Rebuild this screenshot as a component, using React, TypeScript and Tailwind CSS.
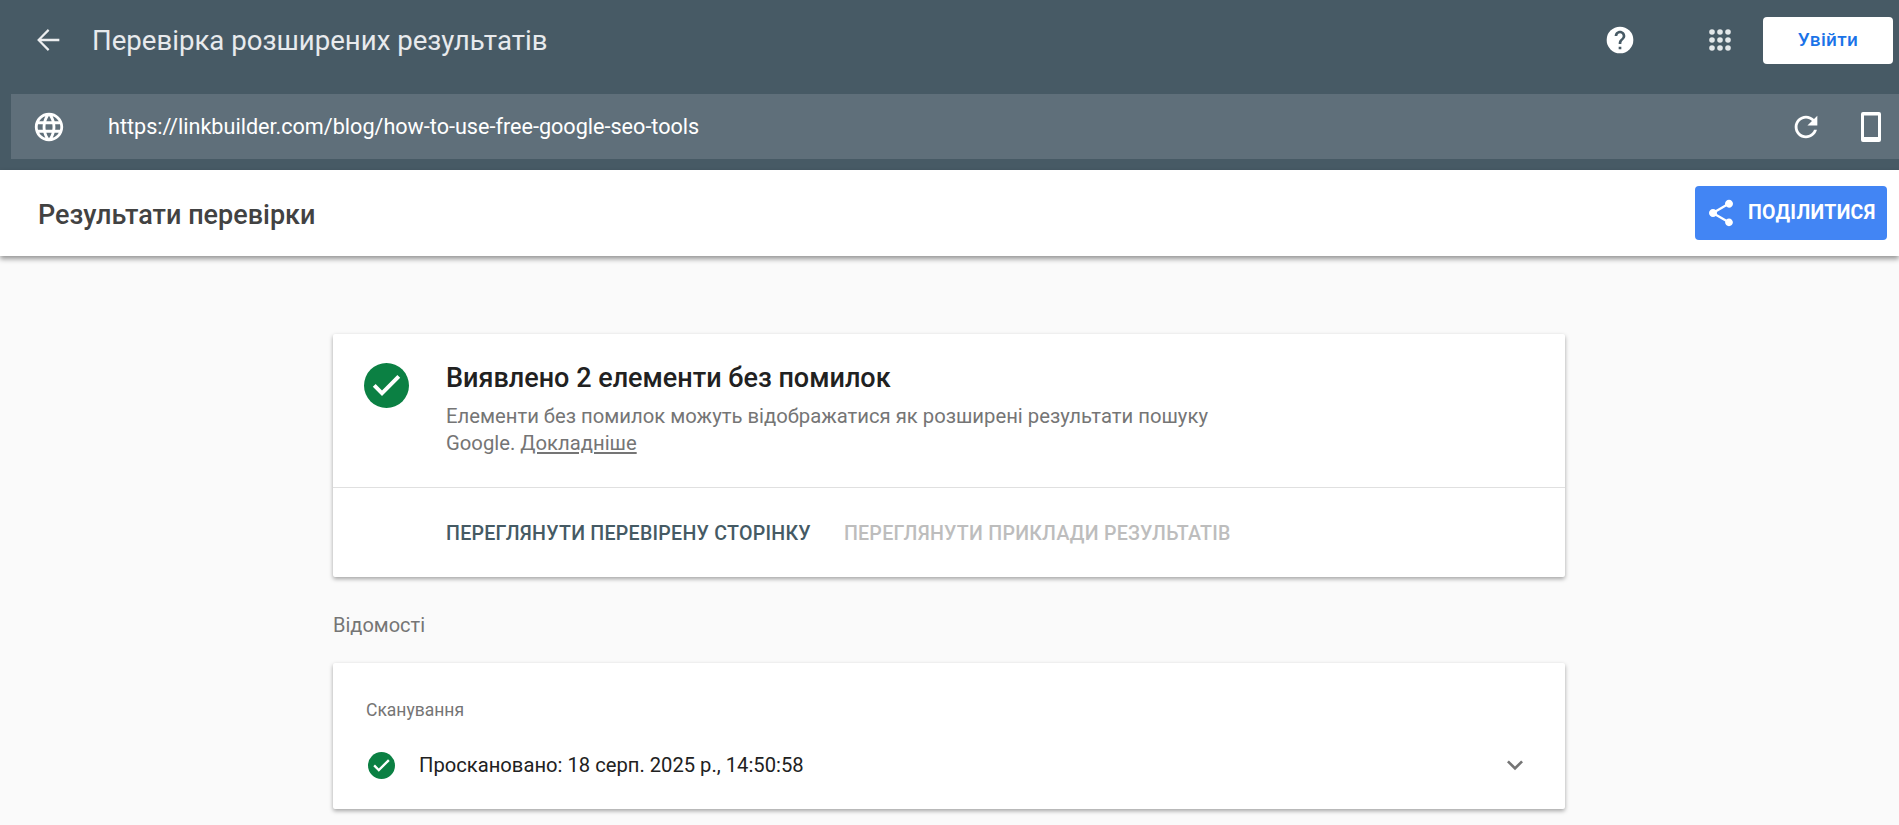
import React from "react";

const Check = ({ className }: { className: string }) => (
  <svg viewBox="0 0 24 24" className={className}>
    <circle cx="12" cy="12" r="12" fill="#0b8043" />
    <path fill="#fff" d="M9.6 17.600L4.7 12.700l1.500-1.500 3.400 3.400 8.200-8.200 1.500 1.500z" />
  </svg>
);

const Dots = () => (
  <svg viewBox="0 0 24 24" className="w-6 h-6 fill-[#e3e7e9]">
    {[4, 12, 20].flatMap((y) =>
      [4, 12, 20].map((x) => <circle key={`${x}-${y}`} cx={x} cy={y} r="2.8" />)
    )}
  </svg>
);

export default function App() {
  return (
    <div className="h-[825px] w-[1899px] overflow-hidden bg-[#fafafa] font-['Roboto',sans-serif]">
      <header className="h-[170px] bg-[#475a65] flex flex-col">
        <div className="h-[94px] flex items-center pb-[14px] pl-[31px] pr-[6px]">
          <svg viewBox="0 0 24 24" className="w-[34px] h-[34px] fill-[#eceef0] shrink-0">
            <path d="M20 11.100H7.300l5.700-5.700L11.900 4.300 4.300 12l7.600 7.700 1.100-1.100-5.700-5.700H20z" />
          </svg>
          <h1 className="ml-[27px] mt-[2px] text-[27.6px] text-[#e8eaed]">Перевірка розширених результатів</h1>
          <svg viewBox="0 0 24 24" className="ml-auto w-[32px] h-[32px] shrink-0">
            <circle cx="12" cy="12" r="10" fill="#fff" />
            <path fill="#475a65" d="M13 19h-2v-2h2v2zm2.07-7.75l-.9.92C13.45 12.9 13 13.5 13 15h-2v-.5c0-1.1.45-2.1 1.17-2.83l1.24-1.26c.37-.36.59-.86.59-1.41 0-1.1-.9-2-2-2s-2 .9-2 2H8c0-2.21 1.79-4 4-4s4 1.79 4 4c0 .88-.36 1.68-.93 2.25z" />
          </svg>
          <div className="ml-[72px] mr-[31px]"><Dots /></div>
          <button className="w-[130px] h-[47px] bg-white rounded-[4px] text-[#1a73e8] text-[19px] font-medium tracking-[0.3px]">Увійти</button>
        </div>
        <div className="ml-[11px] h-[65px] bg-[#5f6f7a] flex items-center pl-[21px] pr-[18px]">
          <svg viewBox="0 0 24 24" className="w-[34px] h-[34px] fill-white shrink-0">
            <path d="M11.99 2C6.47 2 2 6.48 2 12s4.47 10 9.99 10C17.52 22 22 17.52 22 12S17.52 2 11.99 2zm6.93 6h-2.95c-.32-1.25-.78-2.45-1.38-3.56 1.84.63 3.37 1.91 4.33 3.56zM12 4.04c.83 1.2 1.48 2.53 1.91 3.96h-3.82c.43-1.43 1.08-2.76 1.91-3.96zM4.26 14C4.1 13.36 4 12.69 4 12s.1-1.36.26-2h3.38c-.08.66-.14 1.32-.14 2 0 .68.06 1.34.14 2H4.26zm.82 2h2.95c.32 1.25.78 2.45 1.38 3.56-1.84-.63-3.37-1.9-4.33-3.56zm2.95-8H5.08c.96-1.66 2.49-2.93 4.33-3.56C8.81 5.55 8.35 6.75 8.03 8zM12 19.96c-.83-1.2-1.48-2.53-1.91-3.96h3.82c-.43 1.43-1.08 2.76-1.91 3.96zM14.34 14H9.66c-.09-.66-.16-1.32-.16-2 0-.68.07-1.35.16-2h4.68c.09.65.16 1.32.16 2 0 .68-.07 1.34-.16 2zm.25 5.56c.6-1.11 1.06-2.31 1.38-3.56h2.95c-.96 1.65-2.49 2.93-4.33 3.56zM16.36 14c.08-.66.14-1.32.14-2 0-.68-.06-1.34-.14-2h3.38c.16.64.26 1.31.26 2s-.1 1.36-.26 2h-3.38z" />
          </svg>
          <span className="ml-[42px] mt-[2px] text-[21.6px] text-white">https://linkbuilder.com/blog/how-to-use-free-google-seo-tools</span>
          <svg viewBox="0 0 24 24" className="ml-auto w-[34px] h-[34px] fill-white shrink-0">
            <path d="M17.65 6.35C16.2 4.9 14.21 4 12 4c-4.42 0-7.99 3.58-7.99 8s3.57 8 7.99 8c3.73 0 6.84-2.55 7.73-6h-2.08c-.82 2.33-3.04 4-5.65 4-3.31 0-6-2.69-6-6s2.69-6 6-6c1.66 0 3.14.69 4.22 1.78L13 11h7V4l-2.35 2.35z" />
          </svg>
          <svg viewBox="0 0 20 30" className="ml-[38px] w-5 h-[30px] fill-white shrink-0">
            <path fillRule="evenodd" d="M2 0h16a2 2 0 0 1 2 2v26a2 2 0 0 1-2 2H2a2 2 0 0 1-2-2V2a2 2 0 0 1 2-2zM3 3.500v21.500h14V3.500z" />
          </svg>
        </div>
      </header>

      <div className="h-[86px] bg-white flex items-center justify-between pl-[38px] pr-[12px] shadow-[0_3px_5px_rgba(0,0,0,0.4)] relative">
        <h2 className="text-[27px] font-medium text-[#424242] mt-[4px]">Результати перевірки</h2>
        <button className="w-[192px] h-[54px] bg-[#4285f4] rounded-[4px] flex items-center pl-[10px] text-white text-[19.5px] font-bold tracking-[0.3px]">
          <svg viewBox="0 0 24 24" className="w-[32px] h-[32px] fill-white shrink-0 mr-[11px]">
            <path d="M18 16.08c-.76 0-1.44.3-1.96.77L8.91 12.7c.05-.23.09-.46.09-.7s-.04-.47-.09-.7l7.05-4.11c.54.5 1.25.81 2.04.81 1.66 0 3-1.34 3-3s-1.34-3-3-3-3 1.34-3 3c0 .24.04.47.09.7L8.04 9.81C7.5 9.31 6.79 9 6 9c-1.66 0-3 1.34-3 3s1.34 3 3 3c.79 0 1.5-.31 2.04-.81l7.12 4.16c-.05.21-.08.43-.08.65 0 1.61 1.31 2.92 2.92 2.92s2.92-1.31 2.92-2.92-1.31-2.92-2.92-2.92z" />
          </svg>
          ПОДІЛИТИСЯ
        </button>
      </div>

      <main className="w-[1232px] ml-[333px] pt-[78px]">
        <section className="h-[243px] bg-white rounded-[2px] shadow-[0_2px_4px_rgba(0,0,0,0.35)]">
          <div className="h-[154px] flex pl-[31px] pt-[29px] border-b border-[#e0e0e0]">
            <Check className="w-[45px] h-[45px] shrink-0" />
            <div className="ml-[37px] w-[800px]">
              <h3 className="text-[27px] leading-[30px] font-medium text-[#212121]">Виявлено 2 елементи без помилок</h3>
              <p className="mt-[10px] text-[20.25px] leading-[26.5px] text-[#757575]">
                Елементи без помилок можуть відображатися як розширені результати пошуку<br />Google. <span className="underline">Докладніше</span>
              </p>
            </div>
          </div>
          <div className="flex pl-[113px] pt-[34px] gap-[33px] text-[19.6px] tracking-[0.25px] leading-[24px] font-medium">
            <span className="text-[#455a64]">ПЕРЕГЛЯНУТИ ПЕРЕВІРЕНУ СТОРІНКУ</span>
            <span className="text-[#bdbdbd]">ПЕРЕГЛЯНУТИ ПРИКЛАДИ РЕЗУЛЬТАТІВ</span>
          </div>
        </section>

        <p className="mt-[36px] text-[20px] leading-[24px] text-[#757575]">Відомості</p>

        <section className="mt-[26px] h-[146px] bg-white rounded-[2px] shadow-[0_2px_4px_rgba(0,0,0,0.35)] pl-[33px] pr-[34px] pt-[37px]">
          <p className="text-[17.5px] leading-[20px] text-[#757575]">Сканування</p>
          <div className="mt-[29px] flex items-center">
            <Check className="w-[27px] h-[27px] shrink-0 ml-[2px]" />
            <span className="ml-[24px] text-[20.2px] text-[#212121]">Проскановано: 18 серп. 2025 р., 14:50:58</span>
            <svg viewBox="0 0 24 24" className="ml-auto w-[32px] h-[32px] fill-[#757575] shrink-0">
              <path d="M16.59 8.59L12 13.17 7.41 8.59 6 10l6 6 6-6z" />
            </svg>
          </div>
        </section>
      </main>
    </div>
  );
}
